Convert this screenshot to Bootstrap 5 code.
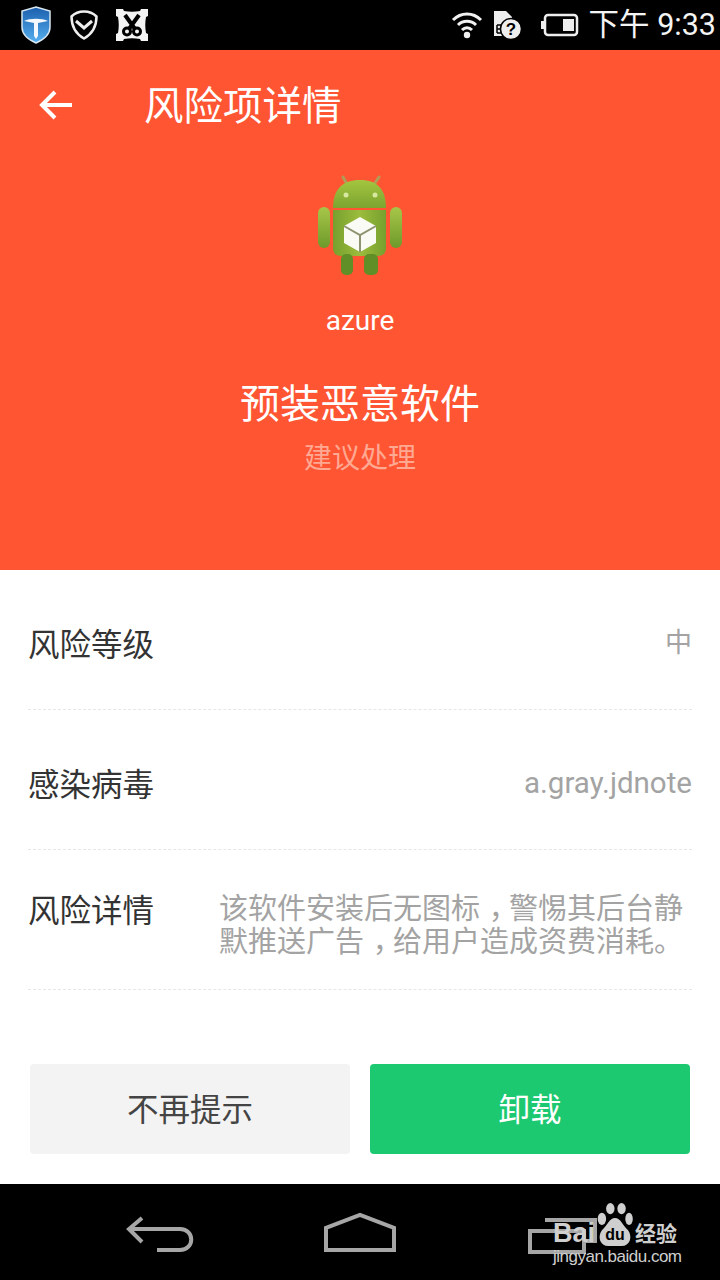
<!DOCTYPE html>
<html lang="zh">
<head>
  <meta charset="UTF-8" />
  <meta name="viewport" content="width=device-width, initial-scale=1" />
  <title>风险项详情</title>
  <link href="https://cdn.jsdelivr.net/npm/bootstrap@5.3.3/dist/css/bootstrap.min.css" rel="stylesheet" />
  <style>
    body {
      width: 720px;
      height: 1280px;
      overflow: hidden;
      background: #fff;
      font-family: "Roboto", "Noto Sans CJK SC", sans-serif;
    }
    .status-bar {
      height: 50px;
      background: #000;
      padding: 0 4px 0 20px;
    }
    .status-left {
      gap: 18px;
    }
    .batt-gap {
      margin-left: 18px;
    }
    .status-time {
      font-size: 30.5px;
      line-height: 50px;
      color: #f4f4f4;
      white-space: nowrap;
      margin-left: 10px;
    }
    .hero {
      height: 520px;
      background: #ff5533;
      color: #fff;
    }
    .hero-bar {
      height: 110px;
      padding-left: 39px;
    }
    .hero-title {
      font-size: 39.5px;
      margin-left: 69px;
      line-height: 50px;
      padding-top: 3px;
    }
    .app-icon {
      margin: 15px auto 0;
    }
    .app-name {
      font-size: 28px;
      line-height: 36px;
      margin-top: 24px;
    }
    .risk-name {
      font-size: 40px;
      line-height: 56px;
      margin-top: 38px;
    }
    .risk-hint {
      font-size: 28px;
      line-height: 40px;
      color: #ffa993;
      margin-top: 6px;
    }
    .info-row {
      height: 140px;
      margin: 0 28px;
      border-bottom: 1px dashed #e6e6e6;
    }
    .info-label {
      font-size: 31.5px;
      color: #333;
      white-space: nowrap;
      padding-top: 13px;
    }
    .info-value {
      font-size: 29.5px;
      color: #a3a3a3;
      padding-top: 7px;
    }
    .info-level {
      font-size: 27px;
    }
    .info-detail {
      width: 473px;
      font-size: 29px;
      line-height: 33px;
      color: #a3a3a3;
      white-space: nowrap;
      padding-top: 43px;
    }
    /* comma sits mid-cell in the reference */
    .mid-comma {
      padding-left: 0.3em;
      letter-spacing: -0.3em;
    }
    .label-top {
      padding-top: 38px;
    }
    .action-row {
      padding: 74px 30px 0;
      gap: 20px;
    }
    .action-btn {
      flex: 1;
      height: 90px;
      font-size: 31.5px;
      border: 0;
      border-radius: 4px;
      padding-top: 10px;
    }
    .btn-ignore {
      background: #f3f3f3;
      color: #444;
    }
    .btn-remove {
      background: #1cc870;
      color: #fff;
    }
    .nav-bottom {
      height: 96px;
      margin-top: 30px;
      background: #000;
      position: relative;
    }
    .baidu-mark {
      position: absolute;
      left: 552px;
      top: 20px;
      color: #cfcfcf;
    }
    .baidu-word {
      position: absolute;
      left: 1px;
      top: 14px;
      font-size: 27px;
      line-height: 30px;
      font-weight: 700;
      font-family: "Liberation Sans", sans-serif;
    }
    .baidu-jy {
      position: absolute;
      left: 83px;
      top: 16px;
      font-size: 21px;
      line-height: 28px;
      font-weight: 700;
      white-space: nowrap;
    }
    .baidu-url {
      position: absolute;
      left: 1px;
      top: 43px;
      font-size: 17px;
      line-height: 20px;
      letter-spacing: -0.5px;
      white-space: nowrap;
      font-family: "Liberation Sans", sans-serif;
    }
    .baidu-paw {
      position: absolute;
      left: 45px;
      top: -1px;
    }
  </style>
</head>
<body>
  <!-- status bar -->
  <div class="status-bar d-flex align-items-center justify-content-between">
    <div class="status-left d-flex align-items-center">
      <svg width="32" height="38" viewBox="0 0 32 38">
        <defs>
          <linearGradient id="shieldFill" x1="0" y1="0" x2="0" y2="1">
            <stop offset="0" stop-color="#1b5fae" />
            <stop offset="1" stop-color="#56b0f0" />
          </linearGradient>
        </defs>
        <path d="M16 1 L30 5 V21 C30 29 23 34 16 37 C9 34 2 29 2 21 V5 Z" fill="url(#shieldFill)" stroke="#d8e6f0" stroke-width="1.5" />
        <path d="M4 15 C10 12 22 12 28 15 L18 17 V30 L16 33 L14 30 V17 Z" fill="#f2f8fc" />
      </svg>
      <svg width="28" height="30" viewBox="0 0 28 30">
        <path d="M14 1.5 C19 1.5 23.5 3.5 26.5 6.5 C26.5 16 22 24 14 28.5 C6 24 1.5 16 1.5 6.5 C4.5 3.5 9 1.5 14 1.5 Z" fill="none" stroke="#eee" stroke-width="2.5" />
        <path d="M6 11 L14 18 L22 11" fill="none" stroke="#eee" stroke-width="3" />
      </svg>
      <svg width="32" height="32" viewBox="0 0 32 32">
        <path d="M0 0 H7 L8 2 C13 3 19 3 24 2 L25 0 H32 V7 L30 8 C29 13 29 19 30 24 L32 25 V32 H25 L24 30 C19 29 13 29 8 30 L7 32 H0 V25 L2 24 C3 19 3 13 2 8 L0 7 Z" fill="#f4f4f4" />
        <path d="M9 6 L19 20 M23 6 L13 20" stroke="#000" stroke-width="4" fill="none" />
        <circle cx="11" cy="22.5" r="3.5" fill="none" stroke="#000" stroke-width="3" />
        <circle cx="21" cy="22.5" r="3.5" fill="none" stroke="#000" stroke-width="3" />
      </svg>
    </div>
    <div class="d-flex align-items-center">
      <svg width="32" height="30" viewBox="0 0 32 30">
        <path d="M2 10 C10 2 22 2 30 10 M7 15 C12 10 20 10 25 15 M11 20 C14 17 18 17 21 20" fill="none" stroke="#f2f2f2" stroke-width="3" />
        <circle cx="16" cy="25" r="3.2" fill="#f2f2f2" />
      </svg>
      <svg class="ms-2" width="32" height="30" viewBox="0 0 32 30">
        <path d="M3 1 H15 L21 7 V26 H3 Z" fill="#eee" />
        <path d="M6 15 h4 M6 19 h4 M6 23 h4 M6 15 v8" stroke="#000" stroke-width="1.5" fill="none" />
        <circle cx="20" cy="19" r="10.5" fill="#eee" stroke="#000" stroke-width="1.5" />
        <text x="20" y="25" text-anchor="middle" font-size="17" font-weight="700" font-family="Liberation Sans" fill="#000">?</text>
      </svg>
      <svg class="batt-gap" width="38" height="26" viewBox="0 0 38 26">
        <rect x="4" y="3" width="32" height="20" rx="3" fill="none" stroke="#eee" stroke-width="2.5" />
        <rect x="0" y="9" width="3" height="8" fill="#eee" />
        <rect x="22" y="7" width="11" height="12" fill="#eee" />
      </svg>
      <span class="status-time">下午 9:33</span>
    </div>
  </div>

  <!-- orange header -->
  <div class="hero text-center">
    <div class="hero-bar d-flex align-items-center text-start">
      <svg width="36" height="32" viewBox="0 0 36 32">
        <path d="M33 16 H4 M16 3 L3 16 L16 29" fill="none" stroke="#fff" stroke-width="4" />
      </svg>
      <span class="hero-title">风险项详情</span>
    </div>
    <svg class="app-icon d-block" width="88" height="104" viewBox="316 175 88 104">
      <defs>
        <linearGradient id="droidHead" x1="0" y1="0" x2="0" y2="1">
          <stop offset="0" stop-color="#a4c53f" />
          <stop offset="1" stop-color="#7ba430" />
        </linearGradient>
        <linearGradient id="droidBody" x1="0" y1="0" x2="1" y2="0">
          <stop offset="0" stop-color="#76a02e" />
          <stop offset="0.5" stop-color="#9cbc3c" />
          <stop offset="1" stop-color="#76a02e" />
        </linearGradient>
        <linearGradient id="droidArm" x1="0" y1="0" x2="0" y2="1">
          <stop offset="0" stop-color="#a8c648" />
          <stop offset="1" stop-color="#6d9a2b" />
        </linearGradient>
      </defs>
      <path d="M343 177 L348 186 M379 177 L373 186" stroke="#b39a55" stroke-width="3" stroke-linecap="round" />
      <path d="M333 208 C333 186 346 180 360 180 C374 180 386 186 386 208 Z" fill="url(#droidHead)" />
      <path d="M333 210 H386 V248 C386 253 383 256 378 256 H341 C336 256 333 253 333 248 Z" fill="url(#droidBody)" />
      <rect x="318" y="207" width="12" height="41" rx="6" fill="url(#droidArm)" />
      <rect x="390" y="207" width="12" height="41" rx="6" fill="url(#droidArm)" />
      <rect x="341" y="254" width="12" height="21" rx="5" fill="#5f8f26" />
      <rect x="364" y="254" width="14" height="21" rx="5" fill="#5f8f26" />
      <circle cx="346" cy="195" r="2.5" fill="#d7e8a0" />
      <circle cx="375" cy="195" r="2.5" fill="#d7e8a0" />
      <path d="M360 217 L376 226 V243 L360 252 L344 243 V226 Z" fill="#fbfbf5" />
      <path d="M344 226 L360 235 L376 226 M360 235 V252" stroke="#8c9470" stroke-width="2" fill="none" />
    </svg>
    <div class="app-name">azure</div>
    <div class="risk-name">预装恶意软件</div>
    <div class="risk-hint">建议处理</div>
  </div>

  <!-- info rows -->
  <div class="info-row d-flex align-items-center justify-content-between">
    <span class="info-label">风险等级</span>
    <span class="info-value info-level">中</span>
  </div>
  <div class="info-row d-flex align-items-center justify-content-between">
    <span class="info-label">感染病毒</span>
    <span class="info-value">a.gray.jdnote</span>
  </div>
  <div class="info-row d-flex justify-content-between">
    <span class="info-label label-top">风险详情</span>
    <div class="info-detail">该软件安装后无图标<span class="mid-comma">，</span>警惕其后台静<br />默推送广告<span class="mid-comma">，</span>给用户造成资费消耗。</div>
  </div>

  <!-- buttons -->
  <div class="action-row d-flex">
    <button class="btn action-btn btn-ignore">不再提示</button>
    <button class="btn action-btn btn-remove">卸载</button>
  </div>

  <!-- android nav -->
  <div class="nav-bottom">
    <svg class="position-absolute top-0 start-0" width="720" height="96" viewBox="0 0 720 96">
      <g fill="none" stroke="#a6a6a6" stroke-width="4">
        <path d="M142 34 L129 45 L142 58 M129 45 H180 C195 45 195 66 180 66 H157" />
        <path d="M326 66 V44 L360 31 L394 44 V66 Z" />
        <path d="M530 47 H584 V68 H530 Z M545 36 H595 V57 H584" />
      </g>
    </svg>
    <div class="baidu-mark">
      <span class="baidu-word">Bai</span>
      <svg class="baidu-paw" width="36" height="44" viewBox="0 0 38 47">
        <g fill="#cfcfcf">
          <ellipse cx="5" cy="17" rx="4.5" ry="6.5" />
          <ellipse cx="14" cy="6" rx="4.5" ry="6" />
          <ellipse cx="26" cy="6" rx="4.5" ry="6" />
          <ellipse cx="34" cy="17" rx="4" ry="6.5" />
          <path d="M19 16 C25 16 27 24 33 29 C38 36 35 46 26 46 C22 46 16 46 12 46 C3 46 0 36 5 29 C11 24 13 16 19 16 Z" />
        </g>
        <text x="19" y="40" text-anchor="middle" font-size="17" font-weight="700" font-family="Liberation Sans" fill="#000">du</text>
      </svg>
      <span class="baidu-jy">经验</span>
      <span class="baidu-url">jingyan.baidu.com</span>
    </div>
  </div>

  <script src="https://cdn.jsdelivr.net/npm/bootstrap@5.3.3/dist/js/bootstrap.bundle.min.js"></script>
</body>
</html>
